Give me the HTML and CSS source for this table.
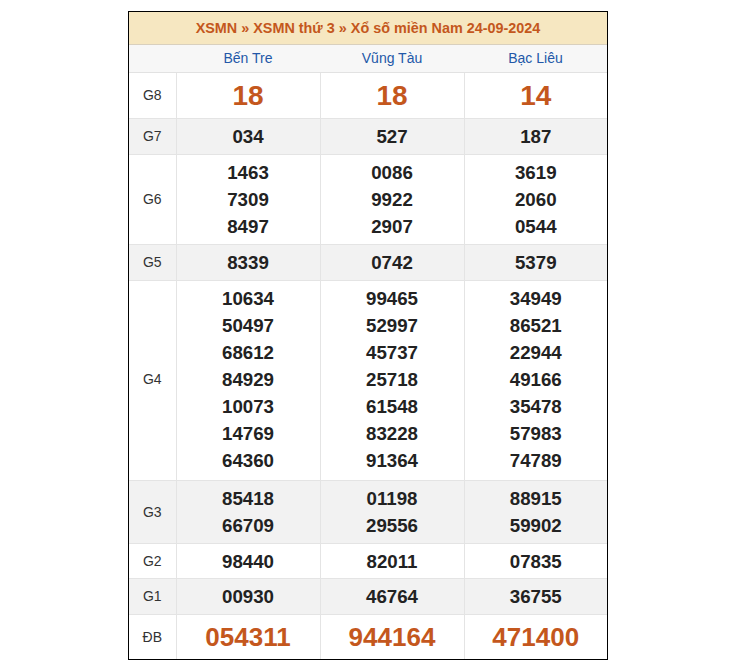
FILE: index.html
```html
<!DOCTYPE html>
<html lang="vi">
<head>
<meta charset="utf-8">
<title>XSMN thứ 3</title>
<link rel="stylesheet" href="styles.css">
</head>
<body>
<div class="box">
  <div class="title">XSMN » XSMN thứ 3 » Xổ số miền Nam 24-09-2024</div>
  <table class="kq">
    <colgroup><col class="c0"><col class="c1"><col class="c1"><col class="c3"></colgroup>
    <thead>
      <tr class="head"><th></th><th>Bến Tre</th><th>Vũng Tàu</th><th>Bạc Liêu</th></tr>
    </thead>
    <tbody>
      <tr class="g8"><td class="lb">G8</td><td class="big">18</td><td class="big">18</td><td class="big">14</td></tr>
      <tr class="alt"><td class="lb">G7</td><td><div>034</div></td><td><div>527</div></td><td><div>187</div></td></tr>
      <tr><td class="lb">G6</td>
        <td><div>1463</div><div>7309</div><div>8497</div></td>
        <td><div>0086</div><div>9922</div><div>2907</div></td>
        <td><div>3619</div><div>2060</div><div>0544</div></td></tr>
      <tr class="alt"><td class="lb">G5</td><td><div>8339</div></td><td><div>0742</div></td><td><div>5379</div></td></tr>
      <tr class="g4"><td class="lb">G4</td>
        <td><div>10634</div><div>50497</div><div>68612</div><div>84929</div><div>10073</div><div>14769</div><div>64360</div></td>
        <td><div>99465</div><div>52997</div><div>45737</div><div>25718</div><div>61548</div><div>83228</div><div>91364</div></td>
        <td><div>34949</div><div>86521</div><div>22944</div><div>49166</div><div>35478</div><div>57983</div><div>74789</div></td></tr>
      <tr class="alt"><td class="lb">G3</td>
        <td><div>85418</div><div>66709</div></td>
        <td><div>01198</div><div>29556</div></td>
        <td><div>88915</div><div>59902</div></td></tr>
      <tr class="g2"><td class="lb">G2</td><td><div>98440</div></td><td><div>82011</div></td><td><div>07835</div></td></tr>
      <tr class="alt"><td class="lb">G1</td><td><div>00930</div></td><td><div>46764</div></td><td><div>36755</div></td></tr>
      <tr class="db"><td class="lb">ĐB</td><td class="big">054311</td><td class="big">944164</td><td class="big">471400</td></tr>
    </tbody>
  </table>
</div>
</body>
</html>
```
FILE: styles.css
```css
html, body {
  margin: 0;
  padding: 0;
  background: #fff;
}
body {
  font-family: "Liberation Sans", Arial, sans-serif;
  color: #222;
  padding-left: 4px;
}
.box {
  width: 478px;
  margin: 11px auto 0;
  border: 1px solid #000;
}
.title {
  background: #f6e7c1;
  color: #c4571d;
  font-weight: bold;
  font-size: 14.4px;
  text-align: center;
  height: 32px;
  line-height: 32px;
  border-bottom: 1px solid #d9d0be;
}
.kq {
  width: 100%;
  border-collapse: collapse;
  table-layout: fixed;
}
.c0 { width: 47px; }
.c1 { width: 144px; }
.c3 { width: 143px; }
.head th {
  background: #f7f7f7;
  color: #2358a8;
  font-weight: normal;
  font-size: 14px;
  height: 26px;
  padding: 0 0 1px;
  border-bottom: 1px solid #e2e2e2;
}
.kq td {
  border: 1px solid #e4e4e4;
  text-align: center;
  vertical-align: middle;
  padding: 4px 0;
  font-weight: bold;
  font-size: 18.7px;
  line-height: 27px;
  color: #222;
}
.kq tr td:first-child { border-left: 0; }
.kq tr td:last-child { border-right: 0; }
.kq tbody tr:last-child td { border-bottom: 0; }
.kq td.lb {
  font-weight: normal;
  font-size: 14px;
  color: #333;
}
.alt td { background: #f2f2f2; }
.g4 td { padding: 4px 0 6px; }
.g2 td { padding: 4px 0 3px; }
.kq td.big {
  color: #c4571d;
  font-size: 28px;
  line-height: 37px;
}
.db td.big { font-size: 26px; line-height: 36px; }
```
